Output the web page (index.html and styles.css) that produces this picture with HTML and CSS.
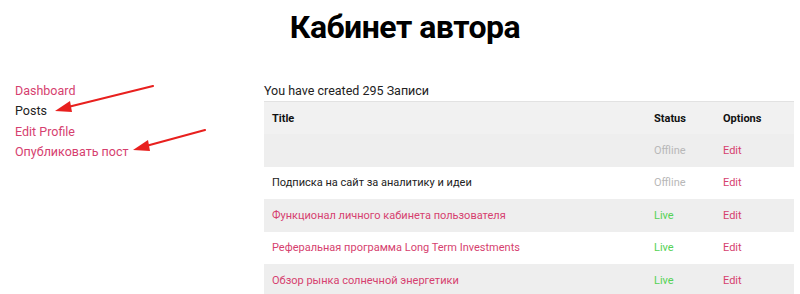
FILE: index.html
```html
<!DOCTYPE html>
<html lang="ru">
<head>
<meta charset="utf-8">
<title>Кабинет автора</title>
<link rel="stylesheet" href="styles.css">
</head>
<body>
<header class="page-header">
  <h1 class="page-title">Кабинет автора</h1>
</header>
<div class="layout">
  <nav class="sidebar">
    <a class="nav-link" href="#">Dashboard</a>
    <span class="nav-link nav-current">Posts</span>
    <a class="nav-link" href="#">Edit Profile</a>
    <a class="nav-link" href="#">Опубликовать пост</a>
  </nav>
  <main class="content">
    <p class="summary">You have created 295 Записи</p>
    <table class="posts">
      <thead>
        <tr><th class="col-title">Title</th><th class="col-status">Status</th><th class="col-options">Options</th></tr>
      </thead>
      <tbody>
        <tr class="row-alt"><td></td><td class="status-off">Offline</td><td><a class="edit" href="#">Edit</a></td></tr>
        <tr><td class="title-plain">Подписка на сайт за аналитику и идеи</td><td class="status-off">Offline</td><td><a class="edit" href="#">Edit</a></td></tr>
        <tr class="row-alt"><td><a class="post-link" href="#">Функционал личного кабинета пользователя</a></td><td class="status-live">Live</td><td><a class="edit" href="#">Edit</a></td></tr>
        <tr><td><a class="post-link" href="#">Реферальная программа Long Term Investments</a></td><td class="status-live">Live</td><td><a class="edit" href="#">Edit</a></td></tr>
        <tr class="row-alt"><td><a class="post-link" href="#">Обзор рынка солнечной энергетики</a></td><td class="status-live">Live</td><td><a class="edit" href="#">Edit</a></td></tr>
      </tbody>
    </table>
  </main>
</div>
<svg class="arrows" width="800" height="294" viewBox="0 0 800 294" aria-hidden="true">
  <line x1="153" y1="86" x2="68" y2="107" stroke="#e8201e" stroke-width="2.2" stroke-linecap="round"/>
  <polygon points="55,111 70,101 72,112" fill="#e8201e"/>
  <line x1="205" y1="130" x2="146" y2="146" stroke="#e8201e" stroke-width="2.2" stroke-linecap="round"/>
  <polygon points="133,150 148,140 150,151" fill="#e8201e"/>
</svg>
</body>
</html>
```
FILE: styles.css
```css
html, body {
  margin: 0;
  padding: 0;
  background: #fff;
}
body {
  font-family: Roboto, "Noto Sans", sans-serif;
  font-size: 12.5px;
  color: #222;
  width: 800px;
  height: 294px;
  overflow: hidden;
  position: relative;
}
.page-header {
  display: flex;
  justify-content: center;
  padding-top: 7px;
  padding-left: 10px;
}
.page-title {
  margin: 0;
  font-size: 32px;
  font-weight: 700;
  line-height: 40px;
  color: #000;
  letter-spacing: -0.5px;
}
.layout {
  display: grid;
  grid-template-columns: 264px 530px;
  margin-top: 34px;
}
.sidebar {
  display: flex;
  flex-direction: column;
  padding-left: 15px;
}
.nav-link {
  line-height: 20.3px;
  color: #d63f6f;
  text-decoration: none;
}
.nav-current {
  color: #222;
}
.summary {
  margin: 0;
  line-height: 20px;
  color: #222;
}
.posts {
  width: 100%;
  border-collapse: collapse;
  border-top: 1px solid #e2e2e2;
  font-size: 11px;
}
.posts th {
  text-align: left;
  font-weight: 700;
  color: #111;
  background: #f1f1f1;
  height: 32px;
  padding: 0 0 0 8px;
}
.posts td {
  height: 32.5px;
  padding: 0 0 0 8px;
}
.col-status { width: 61px; }
.col-options { width: 71px; }
.row-alt td {
  background: #eeeeee;
}
.title-plain { color: #222; }
.post-link {
  color: #d63f6f;
  text-decoration: none;
}
.status-off { color: #b8b8b8; }
.status-live { color: #55d255; }
.edit {
  color: #d63f6f;
  text-decoration: none;
}
.arrows {
  position: absolute;
  left: 0;
  top: 0;
  pointer-events: none;
}
```
